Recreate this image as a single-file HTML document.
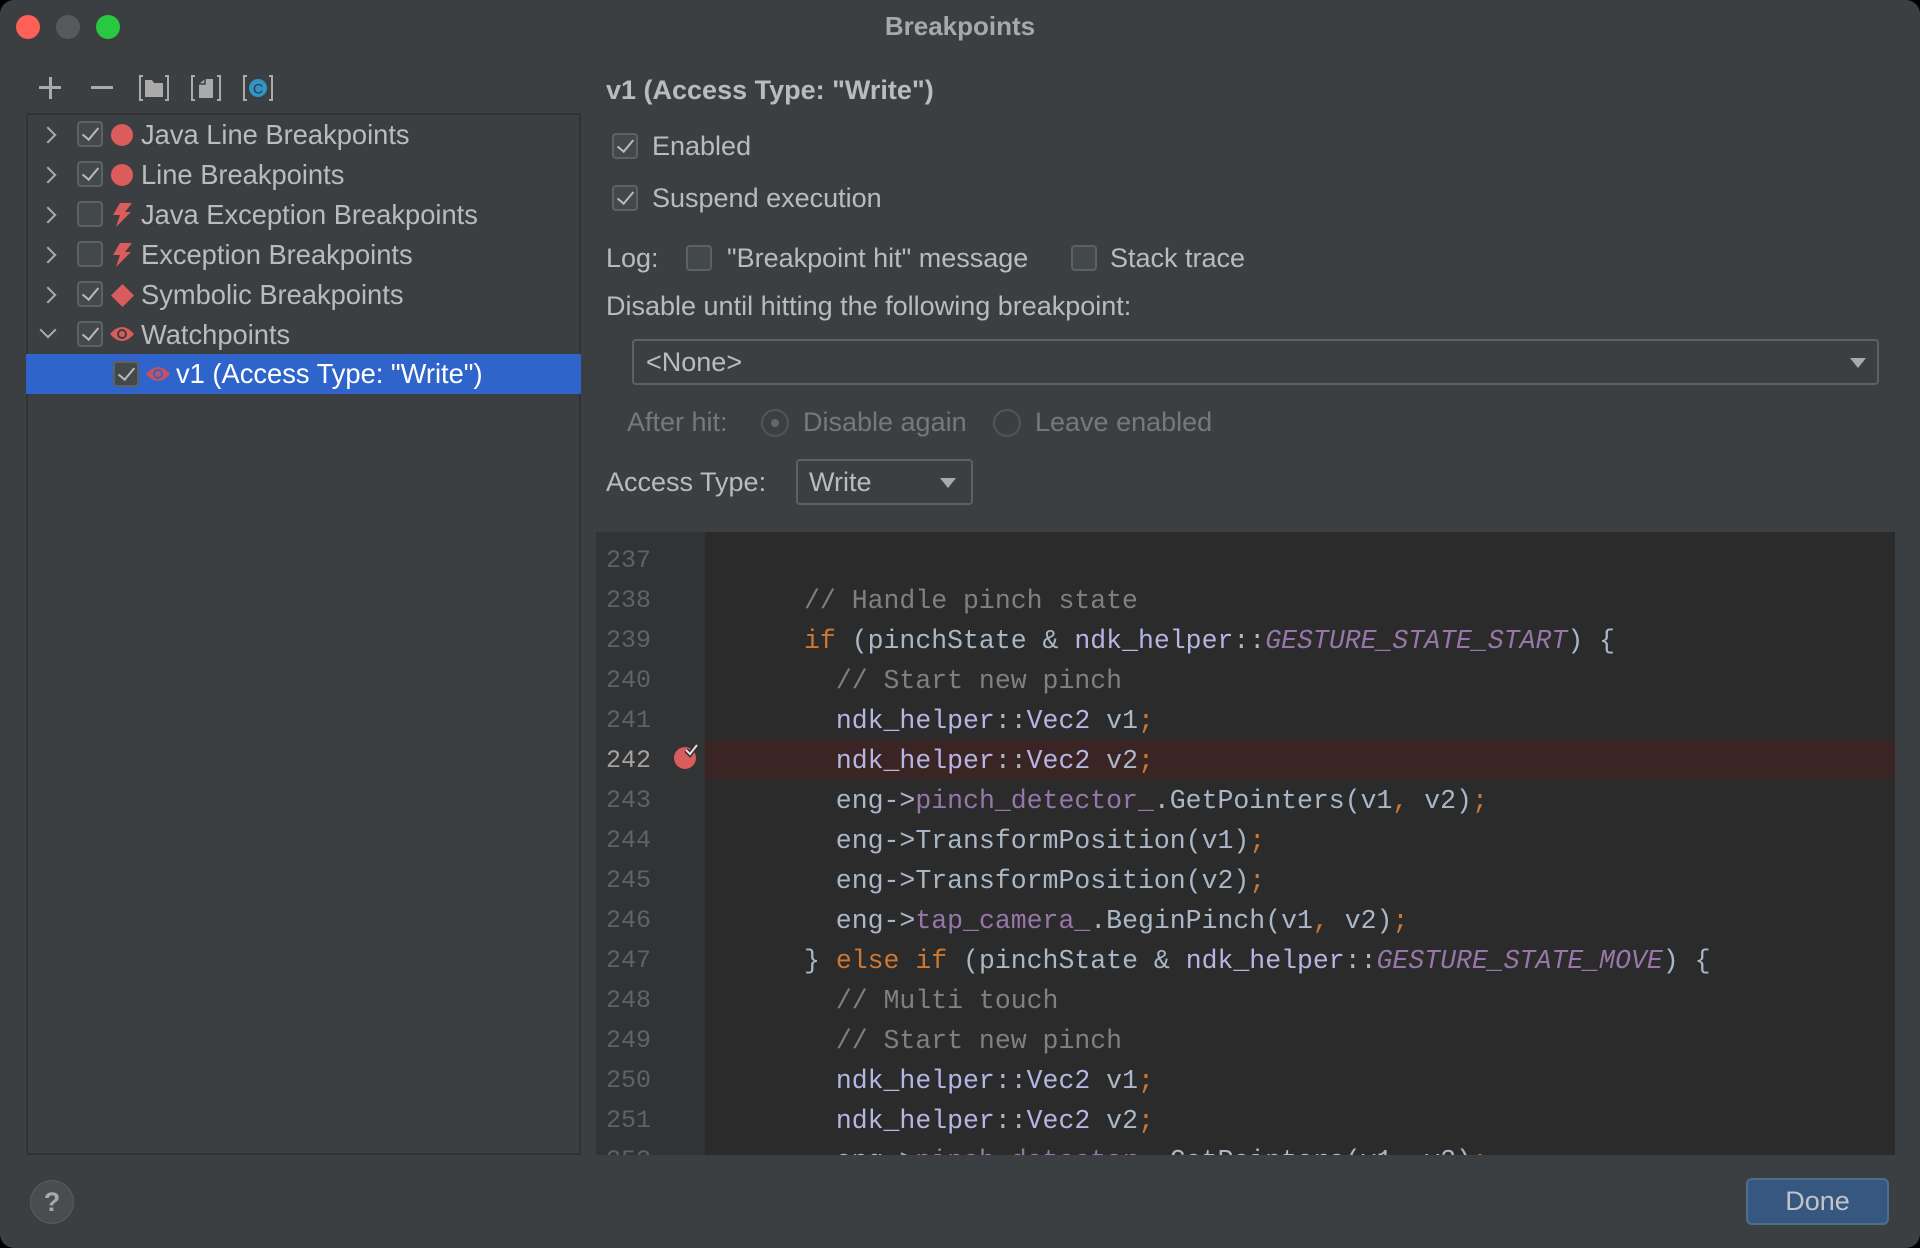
<!DOCTYPE html>
<html><head><meta charset="utf-8"><style>
*{margin:0;padding:0;box-sizing:border-box}
html,body{width:1920px;height:1248px;background:#000;overflow:hidden}
#win{position:absolute;left:0;top:0;width:1920px;height:1248px;background:#3c3f41;border-radius:14px;overflow:hidden;font-family:"Liberation Sans",sans-serif;color:#bbbbbb;font-size:27px}
.a{position:absolute;white-space:nowrap}
.tl{position:absolute;width:24px;height:24px;border-radius:50%;top:15px}
.cb{position:absolute;width:26px;height:26px;border:2px solid #5e6164;border-radius:4px;background:#43494a}
.cb.on::after{content:"";position:absolute;left:7px;top:1px;width:7px;height:14px;border:solid #bbb;border-width:0 2.5px 2.5px 0;transform:rotate(40deg)}
.row{position:absolute;left:26px;width:555px;height:40px}
.chev{position:absolute;left:42px;width:12px;height:12px;border:solid #aaa;border-width:2px 2px 0 0;transform:rotate(45deg)}
.dot{position:absolute;width:22px;height:22px;border-radius:50%;background:#db5c5c}
.t{position:absolute;left:141px;font-size:27.3px;line-height:40px}
.code{position:absolute;font-family:"Liberation Mono","DejaVu Sans Mono",monospace;font-size:26.5px;color:#a9b7c6;line-height:40px;white-space:pre}
.ln{position:absolute;left:604px;width:50px;font-family:"Liberation Mono",monospace;font-size:25px;color:#606366;line-height:40px}
.c{color:#808080}.k{color:#cc7832}.n{color:#b5b6e3}.p{color:#9876aa}.i{color:#9876aa;font-style:italic}
</style></head><body><div id="win">
<div class="tl" style="left:16px;background:#fe5f57"></div>
<div class="tl" style="left:56px;background:#58595b"></div>
<div class="tl" style="left:96px;background:#28c840"></div>
<div class="a" style="left:0;width:1920px;text-align:center;top:11px;font-size:26px;font-weight:bold;color:#a8a8a8">Breakpoints</div>
<div class="a" style="left:39px;top:86px;width:22px;height:3px;background:#aaa"></div>
<div class="a" style="left:48.5px;top:77px;width:3px;height:22px;background:#aaa"></div>
<div class="a" style="left:91px;top:86px;width:22px;height:3px;background:#aaa"></div>
<svg class="a" style="left:139px;top:74px" width="30" height="28"><path d="M4 2H1V26H4M26 2H29V26H26" stroke="#aaa" stroke-width="2" fill="none"/><path d="M6 6H13L15 9H24V23H6Z" fill="#aaa"/></svg>
<svg class="a" style="left:191px;top:74px" width="30" height="28"><path d="M4 2H1V26H4M26 2H29V26H26" stroke="#aaa" stroke-width="2" fill="none"/><path d="M8 10L14 5H22V24H8Z" fill="#aaa"/><path d="M14 5V10H8" stroke="#3c3f41" stroke-width="1.5" fill="none"/></svg>
<svg class="a" style="left:243px;top:74px" width="30" height="28"><path d="M4 2H1V26H4M26 2H29V26H26" stroke="#aaa" stroke-width="2" fill="none"/><circle cx="15" cy="14" r="9" fill="#3592c4"/><text x="15" y="19.5" font-size="14" text-anchor="middle" fill="#1d3a4c" font-family="Liberation Sans">C</text></svg>
<div class="a" style="left:26px;top:113px;width:555px;height:1042px;border:2px solid #323232;background:#3c3f41"></div>
<div class="row" style="top:354px;background:#2f65ca"></div>
<div class="chev" style="top:129px"></div>
<div class="chev" style="top:169px"></div>
<div class="chev" style="top:209px"></div>
<div class="chev" style="top:249px"></div>
<div class="chev" style="top:289px"></div>
<div class="chev" style="top:324px;transform:rotate(135deg)"></div>
<div class="cb on" style="left:77px;top:121px"></div>
<div class="cb on" style="left:77px;top:161px"></div>
<div class="cb" style="left:77px;top:201px"></div>
<div class="cb" style="left:77px;top:241px"></div>
<div class="cb on" style="left:77px;top:281px"></div>
<div class="cb on" style="left:77px;top:321px"></div>
<div class="cb on" style="left:113px;top:361px"></div>
<div class="dot" style="left:111px;top:124px"></div>
<div class="dot" style="left:111px;top:164px"></div>
<svg class="a" style="left:110px;top:202px" width="24" height="26"><path d="M10 1H22L15 10H21L6 25L10 13H3Z" fill="#db5c5c"/></svg>
<svg class="a" style="left:110px;top:242px" width="24" height="26"><path d="M10 1H22L15 10H21L6 25L10 13H3Z" fill="#db5c5c"/></svg>
<svg class="a" style="left:110px;top:283px" width="25" height="25"><path d="M12.5 1L24 12.5L12.5 24L1 12.5Z" fill="#db5c5c"/></svg>
<svg class="a" style="left:109px;top:324px" width="26" height="20"><path d="M1 10Q13 -4 25 10Q13 24 1 10Z" fill="#db5c5c"/><circle cx="13" cy="10" r="5" fill="#3c3f41"/><circle cx="13" cy="10" r="3" fill="#db5c5c"/></svg>
<svg class="a" style="left:145px;top:364px" width="26" height="20"><path d="M1 10Q13 -4 25 10Q13 24 1 10Z" fill="#c85060"/><circle cx="13" cy="10" r="5" fill="#2f65ca"/><circle cx="13" cy="10" r="3" fill="#c85060"/></svg>
<div class="t" style="top:115px">Java Line Breakpoints</div>
<div class="t" style="top:155px">Line Breakpoints</div>
<div class="t" style="top:195px">Java Exception Breakpoints</div>
<div class="t" style="top:235px">Exception Breakpoints</div>
<div class="t" style="top:275px">Symbolic Breakpoints</div>
<div class="t" style="top:315px">Watchpoints</div>
<div class="t" style="top:354px;left:176px;color:#fff">v1 (Access Type: "Write")</div>
<div class="a" style="left:606px;top:75px;font-weight:bold;font-size:27px">v1 (Access Type: "Write")</div>
<div class="cb on" style="left:612px;top:133px"></div>
<div class="a" style="left:652px;top:131px">Enabled</div>
<div class="cb on" style="left:612px;top:185px"></div>
<div class="a" style="left:652px;top:183px">Suspend execution</div>
<div class="a" style="left:606px;top:243px">Log:</div>
<div class="cb" style="left:686px;top:245px"></div>
<div class="a" style="left:727px;top:243px">"Breakpoint hit" message</div>
<div class="cb" style="left:1071px;top:245px"></div>
<div class="a" style="left:1110px;top:243px">Stack trace</div>
<div class="a" style="left:606px;top:291px">Disable until hitting the following breakpoint:</div>
<div class="a" style="left:632px;top:339px;width:1247px;height:46px;border:2px solid #5e6164;border-radius:4px;background:#3c3f41"></div>
<div class="a" style="left:646px;top:347px">&lt;None&gt;</div>
<div class="a" style="left:1850px;top:358px;border:8px solid transparent;border-top:10px solid #aaa;border-bottom:0"></div>
<div class="a" style="left:627px;top:407px;color:#787878">After hit:</div>
<div class="a" style="left:761px;top:409px;width:28px;height:28px;border-radius:50%;border:2px solid #555"></div>
<div class="a" style="left:771px;top:419px;width:8px;height:8px;border-radius:50%;background:#666"></div>
<div class="a" style="left:803px;top:407px;color:#787878">Disable again</div>
<div class="a" style="left:993px;top:409px;width:28px;height:28px;border-radius:50%;border:2px solid #555"></div>
<div class="a" style="left:1035px;top:407px;color:#787878">Leave enabled</div>
<div class="a" style="left:606px;top:467px">Access Type:</div>
<div class="a" style="left:796px;top:459px;width:177px;height:46px;border:2px solid #5e6164;border-radius:4px"></div>
<div class="a" style="left:809px;top:467px">Write</div>
<div class="a" style="left:940px;top:478px;border:8px solid transparent;border-top:10px solid #aaa;border-bottom:0"></div>
<div class="a" style="left:596px;top:532px;width:1299px;height:623px;background:#2b2b2b;overflow:hidden">
<div class="a" style="left:0;top:0;width:109px;height:623px;background:#313335"></div>
<div class="a" style="left:109px;top:208px;width:1190px;height:39px;background:#3b2424"></div>
</div>
<div class="a" style="left:596px;top:532px;width:1299px;height:623px;overflow:hidden">
<div class="ln" style="left:10px;top:9px">237<br>238<br>239<br>240<br>241<br><span style="color:#a4a3a3">242</span><br>243<br>244<br>245<br>246<br>247<br>248<br>249<br>250<br>251<br>252</div>
<svg class="a" style="left:75px;top:210px" width="30" height="30"><circle cx="14" cy="16" r="11" fill="#db5c5c"/><path d="M15 8L19 12L26 3" stroke="#2b2b2b" stroke-width="5" fill="none"/><path d="M15 8L19 12L26 3" stroke="#ddd" stroke-width="2.2" fill="none"/></svg>
<div class="code" style="left:208px;top:9px">
<span class="c">// Handle pinch state</span>
<span class="k">if</span> (pinchState &amp; <span class="n">ndk_helper</span>::<span class="i">GESTURE_STATE_START</span>) {
  <span class="c">// Start new pinch</span>
  <span class="n">ndk_helper</span>::<span class="n">Vec2</span> v1<span class="k">;</span>
  <span class="n">ndk_helper</span>::<span class="n">Vec2</span> v2<span class="k">;</span>
  eng-&gt;<span class="p">pinch_detector_</span>.GetPointers(v1<span class="k">,</span> v2)<span class="k">;</span>
  eng-&gt;TransformPosition(v1)<span class="k">;</span>
  eng-&gt;TransformPosition(v2)<span class="k">;</span>
  eng-&gt;<span class="p">tap_camera_</span>.BeginPinch(v1<span class="k">,</span> v2)<span class="k">;</span>
} <span class="k">else if</span> (pinchState &amp; <span class="n">ndk_helper</span>::<span class="i">GESTURE_STATE_MOVE</span>) {
  <span class="c">// Multi touch</span>
  <span class="c">// Start new pinch</span>
  <span class="n">ndk_helper</span>::<span class="n">Vec2</span> v1<span class="k">;</span>
  <span class="n">ndk_helper</span>::<span class="n">Vec2</span> v2<span class="k">;</span>
  eng-&gt;<span class="p">pinch_detector_</span>.GetPointers(v1<span class="k">,</span> v2)<span class="k">;</span></div>
</div>
<div class="a" style="left:30px;top:1180px;width:44px;height:44px;border-radius:50%;background:#4a4d4f;border:1.5px solid #5a5d5f;text-align:center;line-height:42px;font-weight:bold;font-size:27px;color:#a8a8a8">?</div>
<div class="a" style="left:1746px;top:1178px;width:143px;height:47px;border-radius:6px;background:#365880;border:2px solid #4c708c;text-align:center;line-height:43px;font-size:27px;color:#c0c4c8">Done</div>
</div></body></html>
